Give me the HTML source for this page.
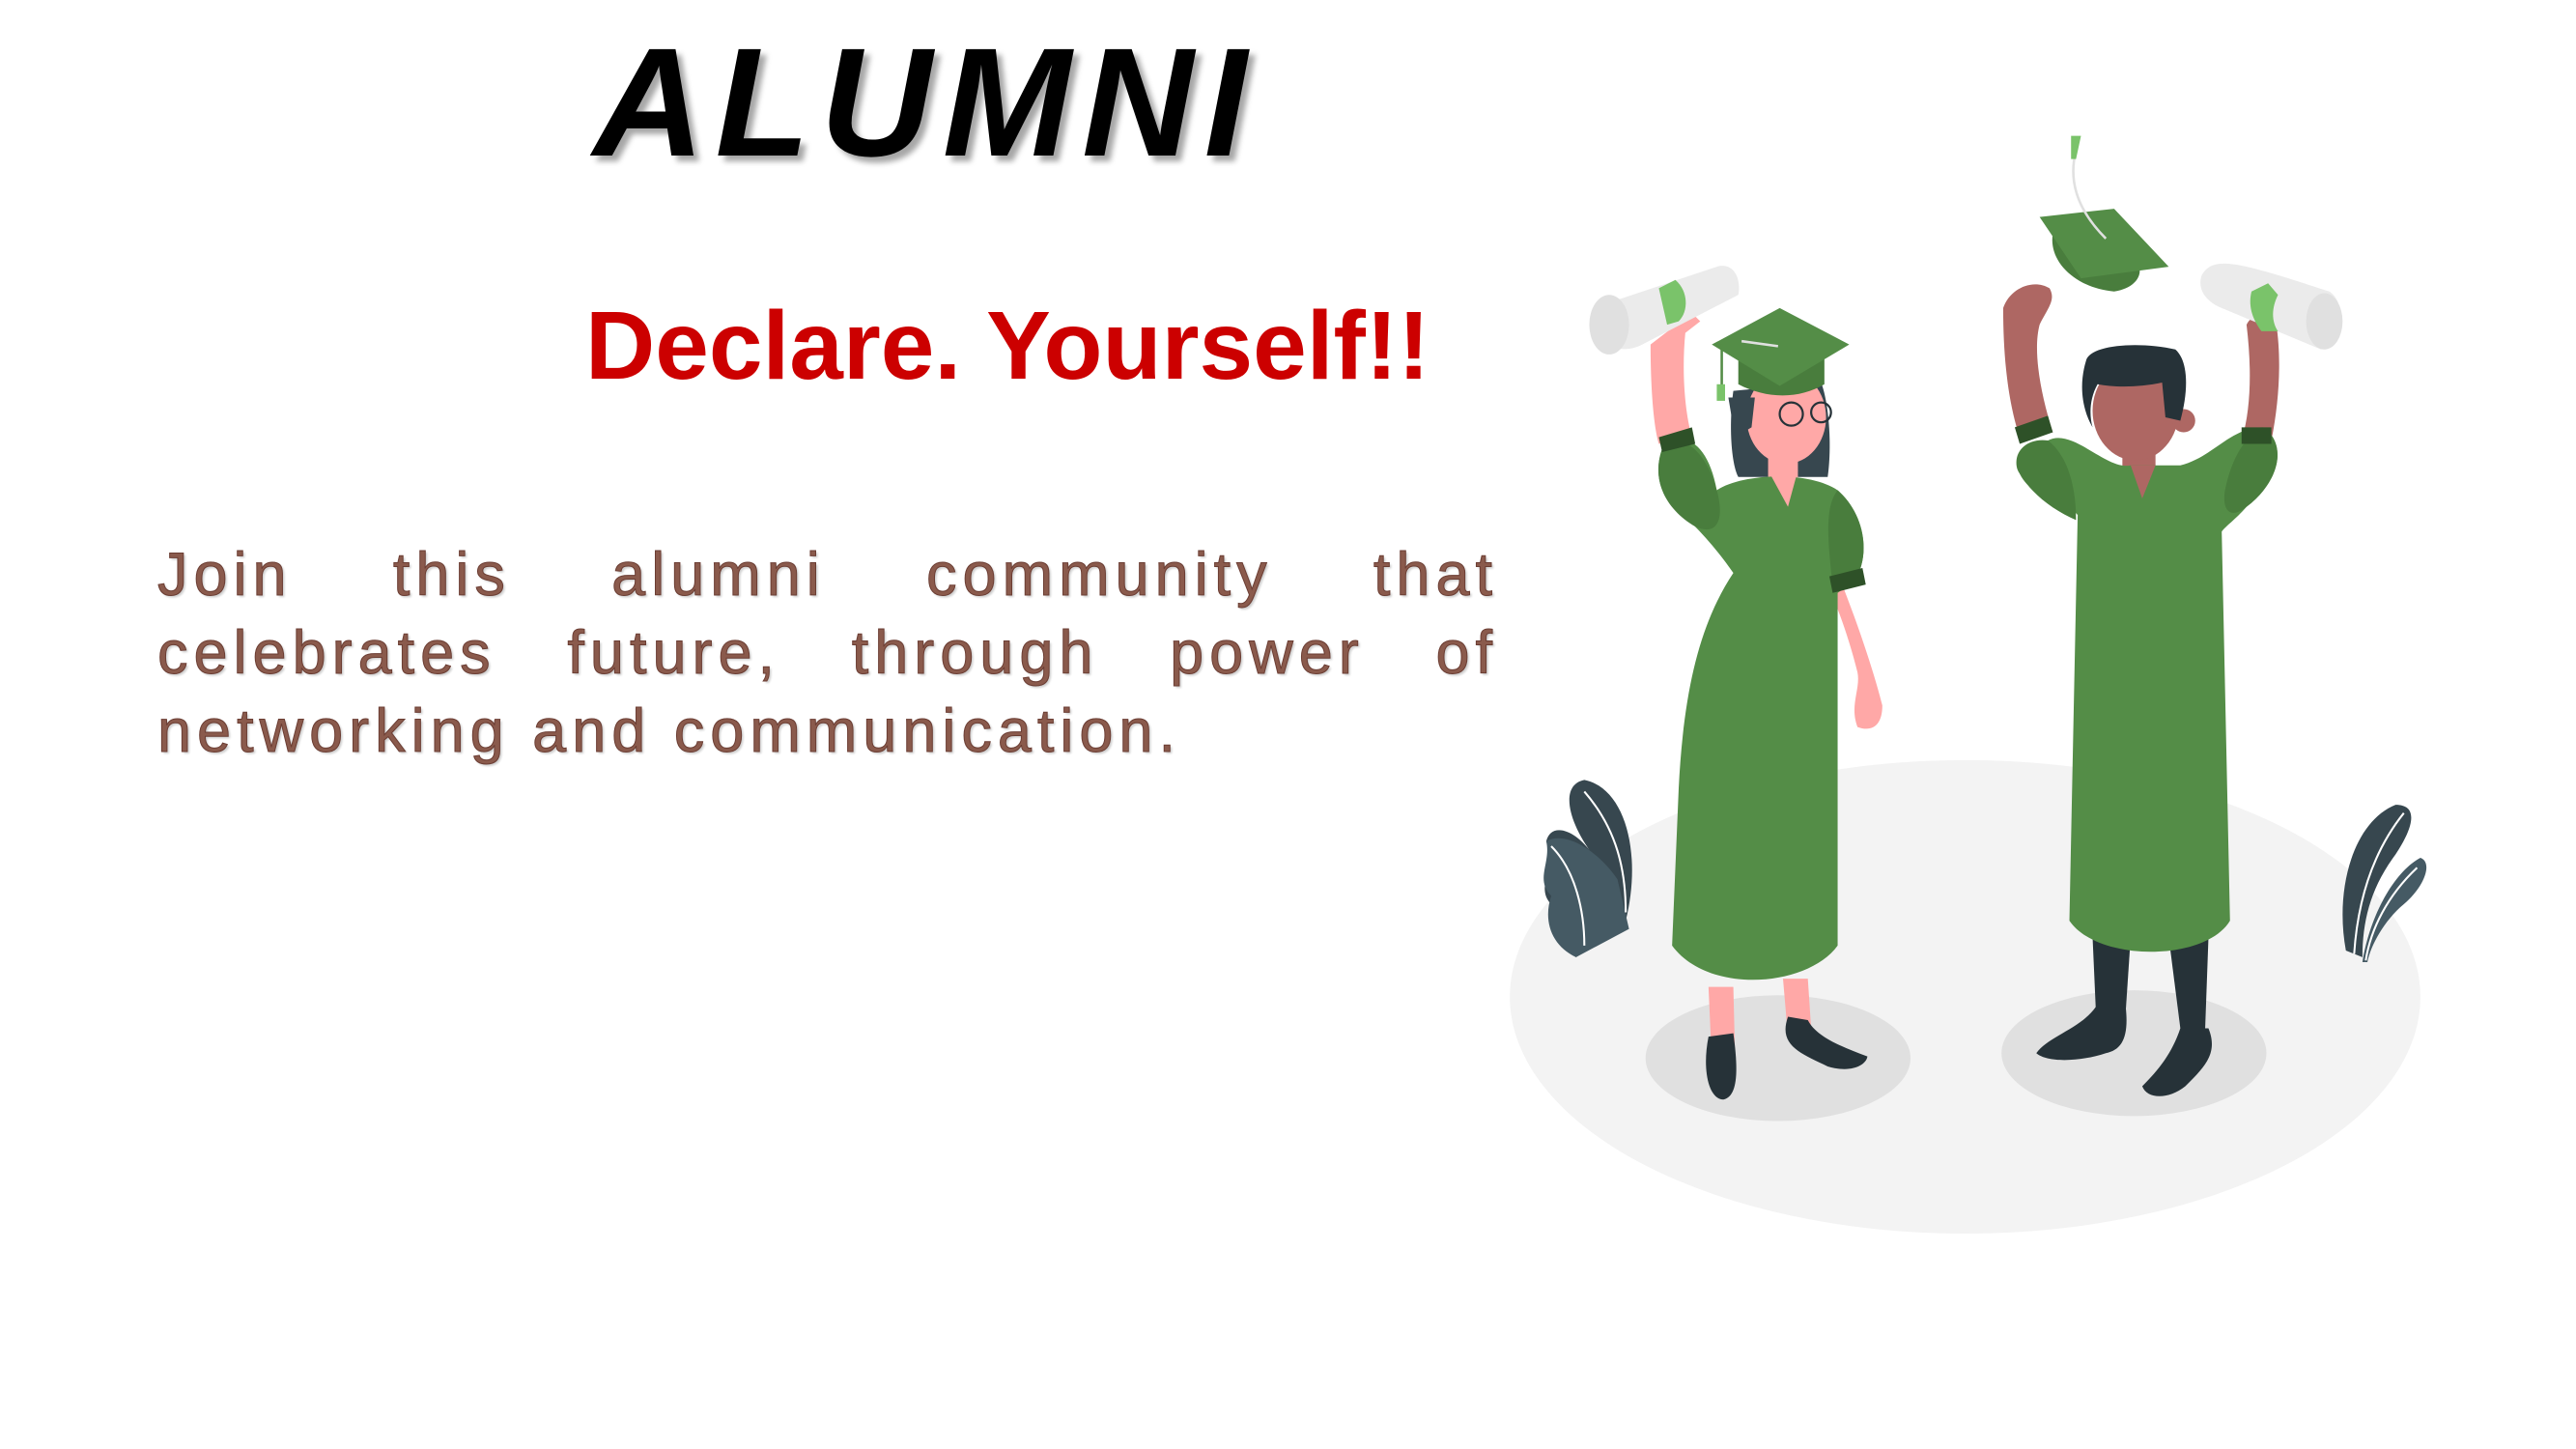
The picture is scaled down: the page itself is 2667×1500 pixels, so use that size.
<!DOCTYPE html>
<html><head><meta charset="utf-8"><style>
html,body{margin:0;padding:0;background:#fff;width:2667px;height:1500px;overflow:hidden;position:relative;font-family:"Liberation Sans",sans-serif}
.t1{position:absolute;left:614px;top:26px;font-size:160px;font-weight:bold;font-style:italic;letter-spacing:11px;color:#000;text-shadow:6px 6px 6px rgba(0,0,0,.35);line-height:1}
.t2{position:absolute;left:606px;top:308px;font-size:100px;font-weight:bold;color:#cc0000;line-height:1;white-space:nowrap}
.body{position:absolute;left:163px;top:555px;width:1388px;font-size:63px;line-height:81px;letter-spacing:6px;color:#8a5a4c;text-align:justify;-webkit-text-stroke:1px #6b3d33;text-shadow:2px 2px 2px rgba(0,0,0,.2)}
svg{position:absolute;left:0;top:0}
</style></head><body>
<div class="t1">ALUMNI</div>
<div class="t2">Declare. Yourself!!</div>
<div class="body">Join this alumni community that celebrates future, through power of networking and communication.</div>
<svg width="2667" height="1500" viewBox="0 0 1556 875">
<g transform="translate(-8,-4)">
<ellipse cx="1195" cy="606" rx="275" ry="143" fill="#f3f3f3"/>
<ellipse cx="1082" cy="643" rx="80" ry="38" fill="#e0e0e0"/>
<ellipse cx="1297" cy="640" rx="80" ry="38" fill="#e0e0e0"/>
<path d="M990,560 C1000,520 990,480 965,475 C950,478 955,500 970,520 C960,505 945,500 942,512 C948,528 935,540 945,550 C945,565 948,575 960,582 Z" fill="#37474f"/>
<path d="M992,565 L960,582 C945,575 940,560 945,545 C935,535 945,525 942,512 C955,505 975,520 985,535 Z" fill="#455a64"/>
<path d="M965,482 C985,505 990,530 990,555 M945,515 C960,530 965,555 965,575" stroke="#fff" stroke-width="1.2" fill="none"/>
<path d="M1425,578 C1418,540 1430,500 1455,490 C1470,490 1465,505 1455,520 C1440,540 1435,560 1435,582 Z" fill="#37474f"/>
<path d="M1435,585 C1440,555 1455,530 1470,522 C1478,525 1472,540 1460,550 C1448,560 1440,575 1438,585 Z" fill="#455a64"/>
<path d="M1460,495 C1440,520 1432,550 1430,580 M1468,528 C1450,545 1440,565 1437,584" stroke="#fff" stroke-width="1.2" fill="none"/>
<path d="M1040,600 L1055,600 L1056,640 L1042,645 Z" fill="#ffa8a7"/>
<path d="M1085,595 L1100,595 L1102,625 L1088,630 Z" fill="#ffa8a7"/>
<path d="M1040,630 C1036,650 1040,668 1049,668 C1058,666 1058,650 1055,628 Z" fill="#263238"/>
<path d="M1088,618 C1082,635 1095,640 1112,648 C1125,652 1135,648 1136,642 C1120,636 1105,630 1100,620 Z" fill="#263238"/>
<path d="M1055,240 C1052,262 1054,285 1058,292 L1112,292 C1115,270 1112,245 1108,235 Z" fill="#37474f"/>
<path d="M1005,212 C1005,240 1007,262 1010,272 L1030,268 C1025,250 1024,225 1026,205 L1035,198 L1030,193 L1018,202 Z" fill="#ffa8a7"/>
<path d="M1118,350 C1130,380 1140,410 1145,430 C1145,443 1138,446 1130,443 C1125,430 1132,420 1130,410 C1125,390 1118,370 1112,358 Z" fill="#ffa8a7"/>
<ellipse cx="1087" cy="256" rx="24" ry="28" fill="#ffa8a7"/>
<rect x="1076" y="275" width="18" height="20" fill="#ffa8a7"/>
<circle cx="1090" cy="254" r="7" fill="none" stroke="#263238" stroke-width="1.3"/>
<circle cx="1108" cy="253" r="6" fill="none" stroke="#263238" stroke-width="1.3"/>
<path d="M1052,244 L1056,268 L1066,262 L1068,244 Z" fill="#37474f"/>
<path d="M1045,300 C1060,290 1100,288 1118,300 C1135,315 1138,340 1128,355 L1118,362 L1118,575 C1100,600 1040,605 1018,575 L1022,480 C1025,420 1035,380 1055,350 C1048,340 1040,330 1030,320 C1015,310 1005,295 1012,275 C1025,262 1040,272 1045,300 Z" fill="#548d47"/>
<path d="M1012,275 C1005,295 1015,312 1032,322 C1045,328 1050,318 1045,300 C1040,280 1025,262 1012,275 Z" fill="#497d3d"/>
<path d="M1118,300 C1135,315 1138,340 1128,355 L1115,358 C1112,330 1110,310 1118,300 Z" fill="#497d3d"/>
<path d="M1010,268 L1030,262 L1032,272 L1012,277 Z" fill="#2e5128"/>
<path d="M1113,352 L1133,347 L1135,357 L1115,362 Z" fill="#2e5128"/>
<path d="M1076,288 L1088,310 L1094,288" fill="#ffa8a7"/>
<path d="M1058,218 L1058,236 C1075,245 1095,245 1110,236 L1110,218 Z" fill="#497d3d"/>
<path d="M1042,212 L1083,190 L1125,212 L1083,237 Z" fill="#548d47"/>
<line x1="1060" y1="210" x2="1082" y2="213" stroke="#e0e0e0" stroke-width="1.5"/>
<path d="M1048,212 L1048,240" stroke="#548d47" stroke-width="1.5"/>
<rect x="1045" y="236" width="5" height="10" fill="#7ac36a"/>
<path d="M970,190 L1045,165 C1055,162 1060,172 1058,182 L1000,212 C985,220 965,210 970,190 Z" fill="#ebebeb"/>
<ellipse cx="980" cy="200" rx="12" ry="18" fill="#e0e0e0"/>
<path d="M1010,178 L1020,173 C1028,180 1028,192 1022,198 L1015,200 Z" fill="#7ac36a"/>
<path d="M1272,570 L1295,570 L1292,615 L1274,615 Z" fill="#263238"/>
<path d="M1318,570 L1342,570 L1340,625 L1325,625 Z" fill="#263238"/>
<path d="M1274,612 L1292,612 C1294,630 1290,638 1280,640 C1265,645 1245,646 1238,640 C1245,630 1265,625 1274,612 Z" fill="#263238"/>
<path d="M1325,625 L1342,625 C1348,640 1340,648 1328,660 C1318,668 1305,668 1302,660 C1312,650 1320,640 1325,625 Z" fill="#263238"/>
<path d="M1218,190 C1218,225 1222,250 1228,268 L1248,265 C1240,240 1236,215 1240,200 C1245,190 1250,185 1246,178 C1236,172 1222,178 1218,190 Z" fill="#ae6763"/>
<path d="M1365,200 C1368,225 1368,250 1362,270 L1380,270 C1385,245 1386,220 1383,200 C1375,192 1368,194 1365,200 Z" fill="#ae6763"/>
<path d="M1290,265 L1310,265 L1310,290 L1290,290 Z" fill="#ae6763"/>
<ellipse cx="1298" cy="252" rx="26" ry="30" fill="#ae6763"/>
<circle cx="1327" cy="258" r="7" fill="#ae6763"/>
<path d="M1268,222 C1270,212 1300,210 1322,215 C1330,222 1330,240 1325,258 L1316,256 L1314,235 C1300,238 1285,238 1275,236 C1270,245 1270,255 1272,262 C1265,250 1264,235 1268,222 Z" fill="#263238"/>
<path d="M1245,270 C1260,262 1280,288 1295,285 L1325,285 C1345,280 1355,262 1375,262 C1390,272 1385,295 1365,310 C1358,318 1352,322 1350,325 L1355,560 C1340,585 1275,585 1258,560 L1263,315 C1255,305 1235,305 1228,290 C1222,282 1230,270 1245,270 Z" fill="#548d47"/>
<path d="M1228,290 C1222,280 1230,268 1245,270 C1258,280 1262,300 1262,318 C1248,312 1235,302 1228,290 Z" fill="#497d3d"/>
<path d="M1375,262 C1390,272 1385,295 1365,310 C1355,318 1350,312 1352,300 C1355,285 1362,268 1375,262 Z" fill="#497d3d"/>
<path d="M1225,262 L1245,255 L1248,265 L1228,272 Z" fill="#2e5128"/>
<path d="M1362,262 L1380,262 L1380,272 L1362,272 Z" fill="#2e5128"/>
<path d="M1295,285 L1302,305 L1310,285" fill="#ae6763"/>
<path d="M1338,170 C1345,158 1360,162 1415,180 C1425,186 1425,210 1410,215 L1350,190 C1340,186 1335,178 1338,170 Z" fill="#ebebeb"/>
<ellipse cx="1412" cy="198" rx="11" ry="17" fill="#e0e0e0"/>
<path d="M1368,180 L1378,175 L1384,182 C1380,190 1380,198 1384,204 L1374,204 C1368,196 1366,188 1368,180 Z" fill="#7ac36a"/>
<path d="M1248,145 C1245,162 1262,178 1285,180 C1298,178 1302,170 1300,165 Z" fill="#497d3d"/>
<path d="M1240,135 L1285,130 L1318,165 L1265,172 Z" fill="#548d47"/>
<path d="M1262,95 C1258,110 1260,128 1280,148" stroke="#e0e0e0" stroke-width="1.5" fill="none"/>
<path d="M1259,86 L1265,86 L1262,100 L1259,100 Z" fill="#7ac36a"/>
</g>
</svg>
</body></html>
